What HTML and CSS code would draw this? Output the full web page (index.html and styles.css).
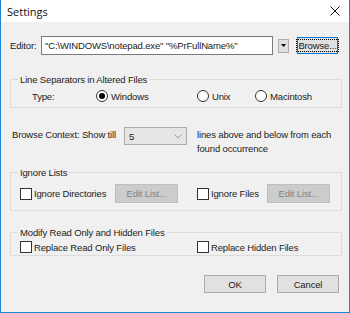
FILE: index.html
```html
<!DOCTYPE html>
<html lang="en">
<head>
    <meta charset="UTF-8">
    <title>Settings</title>
    <link rel="stylesheet" href="styles.css">
</head>
<body>
    <div class="window">
        <div class="titlebar">
            <span class="title">Settings</span>
            <svg class="close" width="10" height="10" viewBox="0 0 10 10">
                <path d="M0.5 0.5 L9.5 9.5 M9.5 0.5 L0.5 9.5" stroke="#111" stroke-width="1"/>
            </svg>
        </div>

        <div class="content">
            <div class="editor-row">
                <span class="editor-label">Editor:</span>
                <div class="textbox">"C:\WINDOWS\notepad.exe" "%PrFullName%"</div>
                <div class="drop-btn">
                    <svg width="5" height="3" viewBox="0 0 5 3"><path d="M0 0 H5 L2.5 3 Z" fill="#000"/></svg>
                </div>
                <div class="btn btn-focus"><span>Browse...</span></div>
            </div>

            <fieldset class="group group-sep">
                <legend>Line Separators in Altered Files</legend>
                <div class="type-row">
                    <span class="type-label">Type:</span>
                    <label class="radio radio-win"><span class="circle checked"></span>Windows</label>
                    <label class="radio radio-unix"><span class="circle"></span>Unix</label>
                    <label class="radio"><span class="circle"></span>Macintosh</label>
                </div>
            </fieldset>

            <div class="context-row">
                <span class="context-label">Browse Context: Show till</span>
                <div class="combo">
                    <span>5</span>
                    <svg width="8" height="5" viewBox="0 0 8 5"><path d="M0.5 0.5 L4 4 L7.5 0.5" fill="none" stroke="#9a9a9a" stroke-width="1"/></svg>
                </div>
                <span class="context-text">lines above and below from each<br>found occurrence</span>
            </div>

            <fieldset class="group group-ignore">
                <legend>Ignore Lists</legend>
                <div class="check-row">
                    <label class="check check-dirs"><span class="box"></span>Ignore Directories</label>
                    <div class="btn btn-disabled edit-1">Edit List...</div>
                    <label class="check check-files"><span class="box"></span>Ignore Files</label>
                    <div class="btn btn-disabled edit-2">Edit List...</div>
                </div>
            </fieldset>

            <fieldset class="group group-modify">
                <legend>Modify Read Only and Hidden Files</legend>
                <div class="check-row">
                    <label class="check check-ro"><span class="box"></span>Replace Read Only Files</label>
                    <label class="check"><span class="box"></span>Replace Hidden Files</label>
                </div>
            </fieldset>

            <div class="footer">
                <div class="btn btn-ok">OK</div>
                <div class="btn btn-cancel">Cancel</div>
            </div>
        </div>
    </div>
</body>
</html>
```

FILE: styles.css
```css
body {
    margin: 0;
    font-family: "Liberation Sans", Arial, sans-serif;
    font-size: 9.5px;
    letter-spacing: -0.15px;
    color: #222;
    background: #fff;
}

.window {
    width: 350px;
    height: 313px;
    box-sizing: border-box;
    border: 1px solid #1a84d8;
    border-top: none;
    background: #f0f0f0;
    display: flex;
    flex-direction: column;
}

.titlebar {
    height: 22px;
    background: #fff;
    display: flex;
    align-items: center;
    justify-content: space-between;
    padding: 0 9px 0 6px;
}

.title {
    font-family: "Open Sans", sans-serif;
    font-size: 11px;
    letter-spacing: 0;
    color: #111;
}

.content {
    padding: 0 7px 0 9px;
}

/* editor line */
.editor-row {
    display: flex;
    align-items: center;
    margin-top: 14px;
    height: 19px;
}

.editor-label {
    width: 31px;
}

.textbox {
    width: 232px;
    height: 19px;
    box-sizing: border-box;
    border: 1px solid #7a7a7a;
    background: #fff;
    padding: 0 3px;
    line-height: 17px;
    white-space: nowrap;
}

.drop-btn {
    width: 11px;
    height: 14px;
    box-sizing: border-box;
    margin-left: 5px;
    border: 1px solid #adadad;
    background: #e1e1e1;
    display: flex;
    align-items: center;
    justify-content: center;
}

.btn {
    box-sizing: border-box;
    border: 1px solid #adadad;
    background: #e1e1e1;
    display: flex;
    align-items: center;
    justify-content: center;
}

.btn-focus {
    width: 41px;
    height: 17px;
    margin-left: 8px;
    border-color: #0078d7;
    padding: 1px;
}

.btn-focus span {
    border: 1px dotted #000;
    padding: 0 1px;
    line-height: 11px;
}

.btn-disabled {
    background: #cccccc;
    border-color: #bfbfbf;
    color: #838383;
    width: 63px;
    height: 19px;
}

/* group boxes */
.group {
    margin: 0;
    padding: 0;
    border: 1px solid #dcdcdc;
    min-width: 0;
}

.group legend {
    margin-left: 7px;
    padding: 0 2px;
    line-height: 11px;
}

.group-sep {
    margin-top: 19px;
    height: 34px;
    box-sizing: border-box;
}

.type-row {
    display: flex;
    align-items: center;
    height: 14px;
    margin-top: 4px;
}

.type-label {
    width: 64px;
    padding-left: 21px;
}

.radio {
    display: flex;
    align-items: center;
}

.radio-win {
    width: 101px;
}

.radio-unix {
    width: 58px;
}

.circle {
    width: 10px;
    height: 10px;
    border: 1px solid #333;
    border-radius: 50%;
    background: #fff;
    margin-right: 3px;
    position: relative;
}

.circle.checked::after {
    content: "";
    position: absolute;
    left: 2px;
    top: 2px;
    width: 6px;
    height: 6px;
    border-radius: 50%;
    background: #000;
}

/* context line */
.context-row {
    display: flex;
    align-items: flex-start;
    margin-top: 19px;
}

.context-label {
    width: 112px;
    padding-left: 2px;
    line-height: 14px;
    margin-top: 1px;
}

.combo {
    width: 63px;
    height: 18px;
    box-sizing: border-box;
    border: 1px solid #acacac;
    background: #e5e5e5;
    display: flex;
    align-items: center;
    justify-content: space-between;
    padding: 0 4px;
}

.context-text {
    margin-left: 10px;
    line-height: 14px;
    margin-top: 1px;
}

/* check rows */
.check-row {
    display: flex;
    align-items: center;
    padding-left: 9px;
}

.check {
    display: flex;
    align-items: center;
}

.box {
    width: 10px;
    height: 10px;
    border: 1px solid #333;
    background: #fff;
    margin-right: 2px;
}

.group-ignore {
    margin-top: 11px;
    height: 44px;
    box-sizing: border-box;
}

.group-ignore .check-row {
    margin-top: 6px;
}

.check-dirs {
    width: 95px;
}

.check-files {
    margin-left: 19px;
    width: 70px;
}

.group-modify {
    margin-top: 16px;
    height: 29px;
    box-sizing: border-box;
}

.group-modify .check-row {
    margin-top: 3px;
}

.check-ro {
    width: 177px;
}

/* dialog buttons */
.footer {
    display: flex;
    justify-content: flex-end;
    gap: 11px;
    margin-top: 19px;
    padding-right: 3px;
}

.btn-ok,
.btn-cancel {
    width: 62px;
    height: 18px;
}
```
